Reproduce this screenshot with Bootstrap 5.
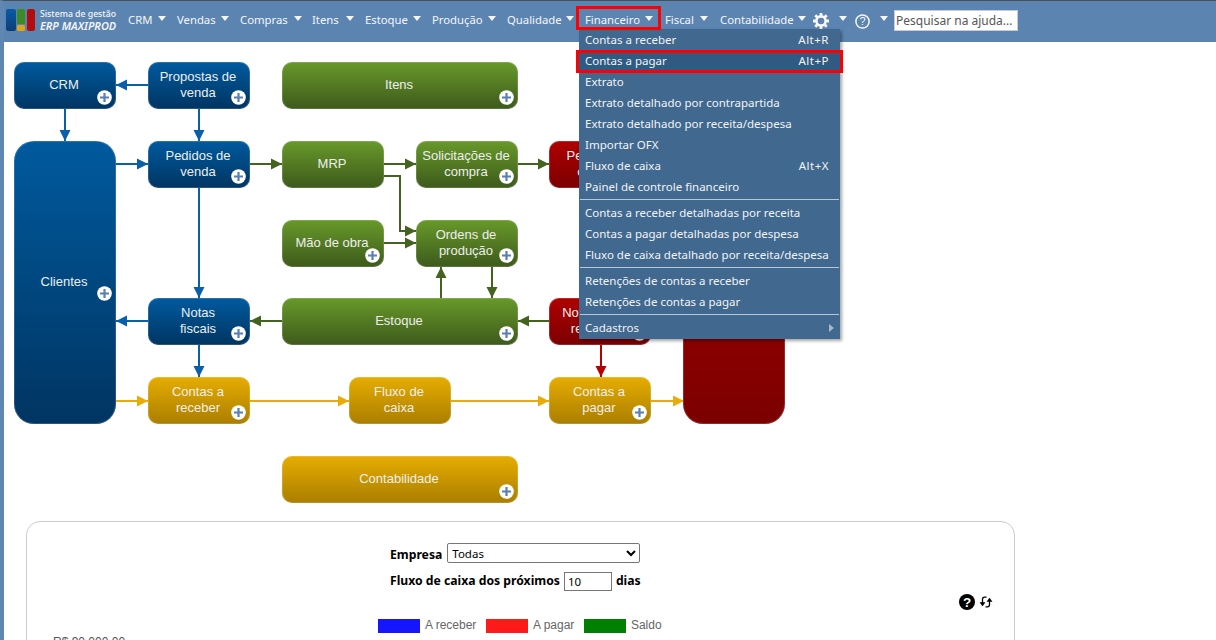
<!doctype html>
<html lang="pt-BR"><head><meta charset="utf-8"><title>ERP Maxiprod</title>
<link href="https://cdn.jsdelivr.net/npm/bootstrap@5.3.0/dist/css/bootstrap.min.css" rel="stylesheet">
<style>
html,body{height:640px;overflow:hidden;background:#fff}
body{font-family:"Noto Sans","DejaVu Sans",sans-serif;font-size:11.5px;color:#000;border-left:4px solid #5f87b3;border-top:1px solid #4a4f57}
.topbar{background:#5c84b1;height:41px;margin-left:-4px;padding:0;position:relative;flex-wrap:nowrap;align-items:flex-start}
.brandmark{position:absolute;left:6px;top:8px}
.brandtxt{position:absolute;left:40px;top:7px;color:#f2f5f8;line-height:12px;font-size:8.7px;font-weight:500;white-space:nowrap}
.brandtxt b{display:block;font-weight:600;font-style:italic;font-size:10.9px}
.menubar{position:absolute;left:0;top:0;height:41px;width:100%}
.mitem{position:absolute;top:11px;color:#f4f6f9;text-decoration:none;white-space:nowrap;line-height:15px;font-size:11.3px}
.mcaret{position:absolute;top:15px;width:0;height:0;border-left:4.5px solid transparent;border-right:4.5px solid transparent;border-top:5px solid #f4f6f9}
.mhelp{position:absolute;left:894px;top:9px;width:124px;height:21px;border:1px solid #c8ccd0;padding:0 1px;font:inherit;font-size:12px;background:#fff;color:#555}
.mhelp::placeholder{color:#555;opacity:1}
.canvas{position:relative;height:480px}
.fnode{position:absolute;border-radius:10px;color:#eee;font-family:"Liberation Sans",Arial,sans-serif;font-size:13px;line-height:16px;display:flex;align-items:center;justify-content:center;text-align:center;box-shadow:inset 0 0 0 1px rgba(255,255,255,.16);padding:0 5px 0 3px}
.fnode span{display:block;margin-top:-1px}
.fblue{background:linear-gradient(#005a9e,#003562)}
.fgreen{background:linear-gradient(#68992a,#3d5a1b)}
.forange{background:linear-gradient(#e6ad00,#aa7e00)}
.fred{background:linear-gradient(#b00000,#7b0000)}
.ftall{border-radius:20px}
.fplus{position:absolute;right:4px;bottom:4px;width:15px;height:15px}
.fplus.fmid{bottom:123px}
.links{position:absolute;left:-4px;top:-42px;width:1216px;height:640px}
.fmenu{display:block;position:absolute;left:579px;top:29px;width:261px;height:310px;margin:0;padding:0;border:0;border-radius:0;background:#41688f;color:#f1f4f7;box-shadow:2px 2px 3px rgba(0,0,0,.35);z-index:5}
.fmenu a{display:flex;justify-content:space-between;height:21px;line-height:21px;padding:0 11px 0 6px;color:#f1f4f7;text-decoration:none;white-space:nowrap;font-size:11.5px}
.fmenu a.hot{background:#2f5a82}
.fmenu a .keys{letter-spacing:.5px}
.fmenu hr{margin:2px 1px;height:0;border:0;border-top:1px solid #b9c7d5;opacity:1}
.fmenu .subarrow{width:0;height:0;border-top:4px solid transparent;border-bottom:4px solid transparent;border-left:5px solid #a9b8c8;align-self:center;margin-right:-5px}
.redmark{position:absolute;border:3px solid #f00;z-index:6;pointer-events:none}
.mark1{left:576px;top:6px;width:85px;height:24px}
.mark2{left:576px;top:50px;width:267px;height:23px}
.panelbox{position:absolute;left:22px;top:479px;width:989px;height:300px;border:1px solid #ccc;border-radius:14px;background:#fff;text-align:center}
.pform{padding-top:20px;font-weight:700;font-size:12.2px;width:270px;margin-left:363px;text-align:left}
.pform .prow{height:26px;display:flex;align-items:center;gap:4px;white-space:nowrap}
.pselect{width:193px;height:20px;font:400 11.5px "Noto Sans",sans-serif;padding:0;margin:-4px 0 0 1px;border:1px solid #767676;border-radius:2px;background:#fff}
.pinput{width:48px;height:19px;font:400 11.5px "Noto Sans",sans-serif;padding:0 3px;border:1px solid #767676}
.ptools{position:absolute;right:21px;top:72px;display:flex;gap:4px;align-items:center}
.plegend{position:absolute;left:351px;top:97px;display:flex;align-items:center;font:12px "Liberation Sans",Arial,sans-serif;color:#666}
.plegend i{display:block;width:42px;height:14px;margin-right:5px}
.plegend span{margin-right:9.6px;margin-top:-2px}
.paxis{position:absolute;left:26px;top:113px;font:12px "Liberation Sans",Arial,sans-serif;color:#555}
.swatch-a{background:#1515ff}.swatch-b{background:#ff1a1a}.swatch-c{background:#008000}
</style></head><body>
<nav class="navbar topbar">
 <svg class="brandmark" width="30" height="24" viewBox="0 0 30 24"><defs><linearGradient id="lb" x1="0" y1="0" x2="0" y2="1"><stop offset="0" stop-color="#0b5aa5"/><stop offset="1" stop-color="#0b3f78"/></linearGradient></defs><rect x="0" y="0" width="10" height="22" rx="2" fill="url(#lb)"/><rect x="11" y="0" width="8" height="15" rx="1.5" fill="#3d8a22"/><rect x="11" y="16" width="8" height="6" rx="1.5" fill="#e0a510"/><rect x="21" y="0" width="8" height="22" rx="2" fill="#b50d0d"/></svg>
 <div class="brandtxt">Sistema de gestão<b>ERP MAXIPROD</b></div>
 <div class="menubar">
  <a class="mitem" style="left:128px">CRM</a><i class="mcaret" style="left:158px"></i>
  <a class="mitem" style="left:177px">Vendas</a><i class="mcaret" style="left:221px"></i>
  <a class="mitem" style="left:240px">Compras</a><i class="mcaret" style="left:294px"></i>
  <a class="mitem" style="left:312px">Itens</a><i class="mcaret" style="left:346px"></i>
  <a class="mitem" style="left:365px">Estoque</a><i class="mcaret" style="left:413px"></i>
  <a class="mitem" style="left:432px">Produção</a><i class="mcaret" style="left:488px"></i>
  <a class="mitem" style="left:507px">Qualidade</a><i class="mcaret" style="left:566px"></i>
  <a class="mitem" style="left:585px">Financeiro</a><i class="mcaret" style="left:645px"></i>
  <a class="mitem" style="left:665px">Fiscal</a><i class="mcaret" style="left:700px"></i>
  <a class="mitem" style="left:720px">Contabilidade</a><i class="mcaret" style="left:798px"></i>
  <svg style="position:absolute;left:813px;top:12px" width="16" height="16" viewBox="0 0 16 16"><circle cx="8" cy="8" r="4.6" fill="none" stroke="#f7f8fa" stroke-width="2.6"/><g stroke="#f7f8fa" stroke-width="2.8"><path d="M8 0v3M8 13v3M0 8h3M13 8h3M2.3 2.3l2.1 2.1M11.6 11.6l2.1 2.1M13.7 2.3l-2.1 2.1M4.4 11.6l-2.1 2.1"/></g></svg>
  <i class="mcaret" style="left:839px"></i>
  <svg style="position:absolute;left:855px;top:13px" width="15" height="15" viewBox="0 0 15 15"><circle cx="7.5" cy="7.5" r="6.6" fill="none" stroke="#f4f6f9" stroke-width="1.5"/><text x="7.5" y="11.3" text-anchor="middle" font-size="11" font-family="Liberation Sans" fill="#f4f6f9">?</text></svg>
  <i class="mcaret" style="left:880px"></i>
  <input class="mhelp" placeholder="Pesquisar na ajuda...">
 </div>
</nav>
<div class="redmark mark1"></div>
<div class="redmark mark2"></div>
<div class="dropdown-menu fmenu">
 <a><span>Contas a receber</span><span class="keys">Alt+R</span></a>
 <a class="hot"><span>Contas a pagar</span><span class="keys">Alt+P</span></a>
 <a>Extrato</a>
 <a>Extrato detalhado por contrapartida</a>
 <a>Extrato detalhado por receita/despesa</a>
 <a>Importar OFX</a>
 <a><span>Fluxo de caixa</span><span class="keys">Alt+X</span></a>
 <a>Painel de controle financeiro</a>
 <hr>
 <a>Contas a receber detalhadas por receita</a>
 <a>Contas a pagar detalhadas por despesa</a>
 <a>Fluxo de caixa detalhado por receita/despesa</a>
 <hr>
 <a>Retenções de contas a receber</a>
 <a>Retenções de contas a pagar</a>
 <hr>
 <a><span>Cadastros</span><i class="subarrow"></i></a>
</div>
<main class="canvas">
 <svg class="links" viewBox="0 0 1216 640">
  <defs>
   <marker id="ab" markerWidth="12" markerHeight="12" refX="11" refY="6" orient="auto" markerUnits="userSpaceOnUse"><path d="M0 .5L11 6L0 11.5z" fill="#0a5fa8"/></marker>
   <marker id="ag" markerWidth="12" markerHeight="12" refX="11" refY="6" orient="auto" markerUnits="userSpaceOnUse"><path d="M0 .5L11 6L0 11.5z" fill="#44631f"/></marker>
   <marker id="ao" markerWidth="12" markerHeight="12" refX="11" refY="6" orient="auto" markerUnits="userSpaceOnUse"><path d="M0 .5L11 6L0 11.5z" fill="#e6ad0a"/></marker>
   <marker id="ar" markerWidth="12" markerHeight="12" refX="11" refY="6" orient="auto" markerUnits="userSpaceOnUse"><path d="M0 .5L11 6L0 11.5z" fill="#b80000"/></marker>
  </defs>
  <g fill="none" stroke="#0a5fa8" stroke-width="2">
   <path d="M148 85H116" marker-end="url(#ab)"/><path d="M65 109V141" marker-end="url(#ab)"/><path d="M199 109V141" marker-end="url(#ab)"/><path d="M116 164H148" marker-end="url(#ab)"/><path d="M199 188V298" marker-end="url(#ab)"/><path d="M148 321H116" marker-end="url(#ab)"/><path d="M199 345V377" marker-end="url(#ab)"/>
  </g>
  <g fill="none" stroke="#44631f" stroke-width="2">
   <path d="M250 164H282" marker-end="url(#ag)"/><path d="M384 164H416" marker-end="url(#ag)"/><path d="M518 164H549" marker-end="url(#ag)"/><path d="M384 176H400V231H416" marker-end="url(#ag)"/><path d="M384 243H416" marker-end="url(#ag)"/><path d="M441 298V267" marker-end="url(#ag)"/><path d="M492 267V298" marker-end="url(#ag)"/><path d="M282 321H250" marker-end="url(#ag)"/><path d="M549 321H518" marker-end="url(#ag)"/>
  </g>
  <g fill="none" stroke="#e6ad0a" stroke-width="2">
   <path d="M116 401H148" marker-end="url(#ao)"/><path d="M250 401H349" marker-end="url(#ao)"/><path d="M451 401H549" marker-end="url(#ao)"/><path d="M651 401H684" marker-end="url(#ao)"/>
  </g>
  <path d="M601 345V377" fill="none" stroke="#b80000" stroke-width="2" marker-end="url(#ar)"/>
 </svg>
 <div class="fnode fblue" style="left:10px;top:20px;width:102px;height:47px"><span>CRM</span><svg class="fplus"><use href="#pl"/></svg></div>
 <div class="fnode fblue" style="left:144px;top:20px;width:102px;height:47px"><span>Propostas de<br>venda</span><svg class="fplus"><use href="#pl"/></svg></div>
 <div class="fnode fgreen" style="left:278px;top:20px;width:236px;height:47px"><span>Itens</span><svg class="fplus"><use href="#pl"/></svg></div>
 <div class="fnode fblue ftall" style="left:10px;top:99px;width:102px;height:283px"><span>Clientes</span><svg class="fplus fmid"><use href="#pl"/></svg></div>
 <div class="fnode fblue" style="left:144px;top:99px;width:102px;height:47px"><span>Pedidos de<br>venda</span><svg class="fplus"><use href="#pl"/></svg></div>
 <div class="fnode fgreen" style="left:278px;top:99px;width:102px;height:47px"><span>MRP</span></div>
 <div class="fnode fgreen" style="left:412px;top:99px;width:102px;height:47px"><span>Solicitações de<br>compra</span><svg class="fplus"><use href="#pl"/></svg></div>
 <div class="fnode fred" style="left:545px;top:99px;width:102px;height:47px"><span>Pedidos de<br>compra</span></div>
 <div class="fnode fgreen" style="left:278px;top:178px;width:102px;height:47px"><span>Mão de obra</span><svg class="fplus"><use href="#pl"/></svg></div>
 <div class="fnode fgreen" style="left:412px;top:178px;width:102px;height:47px"><span>Ordens de<br>produção</span><svg class="fplus"><use href="#pl"/></svg></div>
 <div class="fnode fblue" style="left:144px;top:256px;width:102px;height:47px"><span>Notas<br>fiscais</span><svg class="fplus"><use href="#pl"/></svg></div>
 <div class="fnode fgreen" style="left:278px;top:256px;width:236px;height:47px"><span>Estoque</span><svg class="fplus"><use href="#pl"/></svg></div>
 <div class="fnode fred" style="left:545px;top:256px;width:102px;height:47px"><span>Notas fiscais<br>recebidas</span><svg class="fplus"><use href="#pl"/></svg></div>
 <div class="fnode forange" style="left:144px;top:335px;width:102px;height:47px"><span>Contas a<br>receber</span><svg class="fplus"><use href="#pl"/></svg></div>
 <div class="fnode forange" style="left:345px;top:335px;width:102px;height:47px"><span>Fluxo de<br>caixa</span></div>
 <div class="fnode forange" style="left:545px;top:335px;width:102px;height:47px"><span>Contas a<br>pagar</span><svg class="fplus"><use href="#pl"/></svg></div>
 <div class="fnode fred ftall" style="left:679px;top:99px;width:102px;height:283px"><span>Fornecedores</span></div>
 <div class="fnode forange" style="left:278px;top:414px;width:236px;height:47px"><span>Contabilidade</span><svg class="fplus"><use href="#pl"/></svg></div>
 <svg width="0" height="0" class="position-absolute"><symbol id="pl" viewBox="0 0 15 15"><circle cx="7.5" cy="7.5" r="7.3" fill="#fff"/><path d="M7.5 3v9M3 7.5h9" stroke="#5a7fb0" stroke-width="2.2"/></symbol></svg>
 <section class="panelbox">
  <div class="pform">
   <div class="prow"><span>Empresa</span><select class="pselect"><option>Todas</option></select></div>
   <div class="prow">Fluxo de caixa dos próximos <input class="pinput" value="10"> dias</div>
  </div>
  <div class="ptools">
   <svg width="16" height="16" viewBox="0 0 16 16"><circle cx="8" cy="8" r="8"/><text x="8" y="12.8" text-anchor="middle" font-size="13.5" font-weight="700" font-family="Liberation Sans" fill="#fff">?</text></svg>
   <svg width="14" height="12" viewBox="0 0 14 12" fill="none" stroke="#000" stroke-width="1.3"><path d="M7.5 1.2H5.5Q3.5 1.2 3.5 3.5V8M6.5 10.8H8.5Q10.5 10.8 10.5 8.5V4"/><path d="M1 6.5l2.5 3.5L6 6.5zM8 5.5l2.5-3.5L13 5.5z" fill="#000" stroke-width=".5"/></svg>
  </div>
  <div class="plegend"><i class="swatch-a"></i><span>A receber</span><i class="swatch-b"></i><span>A pagar</span><i class="swatch-c"></i><span>Saldo</span></div>
  <div class="paxis">R$ 90.000,00</div>
 </section>
</main>
<script src="https://cdn.jsdelivr.net/npm/bootstrap@5.3.0/dist/js/bootstrap.bundle.min.js"></script>
</body></html>
